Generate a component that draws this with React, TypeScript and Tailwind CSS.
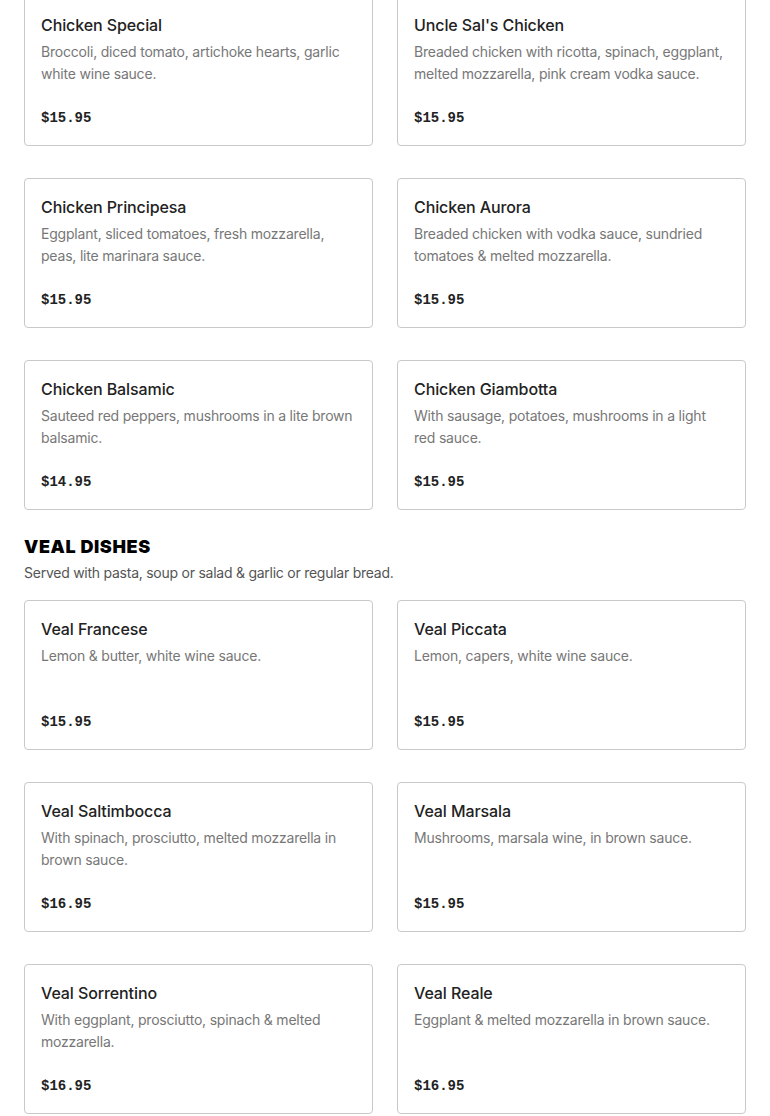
const chicken = [
  { name: 'Chicken Special', desc: 'Broccoli, diced tomato, artichoke hearts, garlic white wine sauce.', price: '$15.95' },
  { name: "Uncle Sal's Chicken", desc: 'Breaded chicken with ricotta, spinach, eggplant, melted mozzarella, pink cream vodka sauce.', price: '$15.95' },
  { name: 'Chicken Principesa', desc: 'Eggplant, sliced tomatoes, fresh mozzarella, peas, lite marinara sauce.', price: '$15.95' },
  { name: 'Chicken Aurora', desc: 'Breaded chicken with vodka sauce, sundried tomatoes & melted mozzarella.', price: '$15.95' },
  { name: 'Chicken Balsamic', desc: 'Sauteed red peppers, mushrooms in a lite brown balsamic.', price: '$14.95' },
  { name: 'Chicken Giambotta', desc: 'With sausage, potatoes, mushrooms in a light red sauce.', price: '$15.95' },
];

const veal = [
  { name: 'Veal Francese', desc: 'Lemon & butter, white wine sauce.', price: '$15.95' },
  { name: 'Veal Piccata', desc: 'Lemon, capers, white wine sauce.', price: '$15.95' },
  { name: 'Veal Saltimbocca', desc: 'With spinach, prosciutto, melted mozzarella in brown sauce.', price: '$16.95' },
  { name: 'Veal Marsala', desc: 'Mushrooms, marsala wine, in brown sauce.', price: '$15.95' },
  { name: 'Veal Sorrentino', desc: 'With eggplant, prosciutto, spinach & melted mozzarella.', price: '$16.95' },
  { name: 'Veal Reale', desc: 'Eggplant & melted mozzarella in brown sauce.', price: '$16.95' },
];

type Item = { name: string; desc: string; price: string };

function Card({ item }: { item: Item }) {
  return (
    <div className="h-[150px] flex flex-col border border-[#c9c9c9] rounded-[4px] bg-white px-4 pt-4 pb-[17px]">
      <h3 className="text-[16px] leading-6 font-medium text-[#222] tracking-[-0.1px]">{item.name}</h3>
      <p className="mt-1 text-[14px] leading-[22px] text-[#777] tracking-[-0.2px]">{item.desc}</p>
      <span className="mt-auto text-[14px] leading-5 font-bold text-[#222] font-['Liberation_Mono',monospace]">
        {item.price}
      </span>
    </div>
  );
}

export default function App() {
  return (
    <div className="min-h-screen bg-white font-['Inter',sans-serif] px-6">
      <div className="-mt-1 grid grid-cols-2 gap-x-6 gap-y-8">
        {chicken.map((c) => (
          <Card key={c.name} item={c} />
        ))}
      </div>

      <header className="mt-[25px] mb-[17px]">
        <h2 className="text-[18px] leading-6 font-black uppercase tracking-[0.6px] text-black">Veal Dishes</h2>
        <p className="mt-1 text-[14px] leading-5 text-[#555] tracking-[-0.25px]">
          Served with pasta, soup or salad &amp; garlic or regular bread.
        </p>
      </header>

      <div className="grid grid-cols-2 gap-x-6 gap-y-8">
        {veal.map((v) => (
          <Card key={v.name} item={v} />
        ))}
      </div>
    </div>
  );
}
